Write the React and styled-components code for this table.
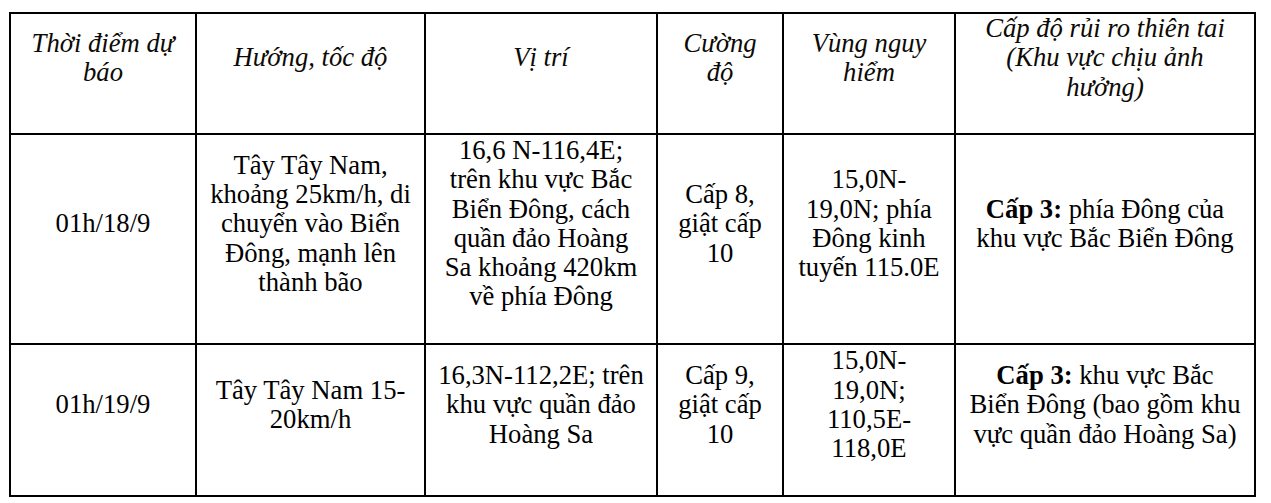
import React from "react";
import styled, { createGlobalStyle } from "styled-components";

const Global = createGlobalStyle`
  *, *::before, *::after { box-sizing: border-box; }
  html, body { margin: 0; padding: 0; background: #ffffff; }
  body { font-family: "Liberation Serif", "Times New Roman", "DejaVu Serif", serif; color: #000; }
`;

const Page = styled.div`
  padding: 12px 0 0 9px;
`;

const Table = styled.table`
  width: 1247px;
  table-layout: fixed;
  border-collapse: separate;
  border-spacing: 0;
  border-left: 2px solid #000;
  border-top: 2px solid #000;
`;

const Row = styled.tr`
  height: ${(p) => p.$h}px;
`;

const HeadCell = styled.th`
  width: ${(p) => p.$w}px;
  border-right: 2px solid #000;
  border-bottom: 2px solid #000;
  padding: 0 8px 31px;
  font-family: "Liberation Serif", "Times New Roman", "DejaVu Serif", serif;
  font-size: 26.67px;
  line-height: 29.3px;
  font-weight: 400;
  font-style: italic;
  text-align: center;
  vertical-align: middle;
  white-space: nowrap;
  color: #0d0a05;
`;

const Cell = styled.td`
  border-right: 2px solid #000;
  border-bottom: 2px solid #000;
  padding: 0 8px 30px;
  font-family: "Liberation Serif", "Times New Roman", "DejaVu Serif", serif;
  font-size: 26.67px;
  line-height: 29.3px;
  text-align: center;
  vertical-align: middle;
  white-space: nowrap;
`;

const Strong = styled.b`
  font-weight: 700;
`;

const Lines = ({ items }) =>
  items.map((t, i) => (
    <React.Fragment key={i}>
      {i > 0 && <br />}
      {t}
    </React.Fragment>
  ));

const headers = [
  { w: 186, lines: ["Thời điểm dự", "báo"] },
  { w: 229, lines: ["Hướng, tốc độ"] },
  { w: 232, lines: ["Vị trí"] },
  { w: 126, lines: ["Cường", "độ"] },
  { w: 172, lines: ["Vùng nguy", "hiểm"] },
  { w: 300, lines: ["Cấp độ rủi ro thiên tai", "(Khu vực chịu ảnh", "hưởng)"] },
];

const rows = [
  {
    h: 210,
    cells: [
      ["01h/18/9"],
      ["Tây Tây Nam,", "khoảng 25km/h, di", "chuyển vào Biển", "Đông, mạnh lên", "thành bão"],
      ["16,6 N-116,4E;", "trên khu vực Bắc", "Biển Đông, cách", "quần đảo Hoàng", "Sa khoảng 420km", "về phía Đông"],
      ["Cấp 8,", "giật cấp", "10"],
      ["15,0N-", "19,0N; phía", "Đông kinh", "tuyến 115.0E"],
    ],
    risk: [" phía Đông của", "khu vực Bắc Biển Đông"],
  },
  {
    h: 152,
    cells: [
      ["01h/19/9"],
      ["Tây Tây Nam 15-", "20km/h"],
      ["16,3N-112,2E; trên", "khu vực quần đảo", "Hoàng Sa"],
      ["Cấp 9,", "giật cấp", "10"],
      ["15,0N-", "19,0N;", "110,5E-", "118,0E"],
    ],
    risk: [" khu vực Bắc", "Biển Đông (bao gồm khu", "vực quần đảo Hoàng Sa)"],
  },
];

export default function App() {
  return (
    <>
      <Global />
      <Page>
        <Table>
          <thead>
            <Row $h={120}>
              {headers.map((h, i) => (
                <HeadCell key={i} $w={h.w}>
                  <Lines items={h.lines} />
                </HeadCell>
              ))}
            </Row>
          </thead>
          <tbody>
            {rows.map((r, i) => (
              <Row key={i} $h={r.h}>
                {r.cells.map((c, j) => (
                  <Cell key={j}>
                    <Lines items={c} />
                  </Cell>
                ))}
                <Cell>
                  <Strong>Cấp 3:</Strong>
                  {r.risk[0]}
                  {r.risk.slice(1).map((t, k) => (
                    <React.Fragment key={k}>
                      <br />
                      {t}
                    </React.Fragment>
                  ))}
                </Cell>
              </Row>
            ))}
          </tbody>
        </Table>
      </Page>
    </>
  );
}
